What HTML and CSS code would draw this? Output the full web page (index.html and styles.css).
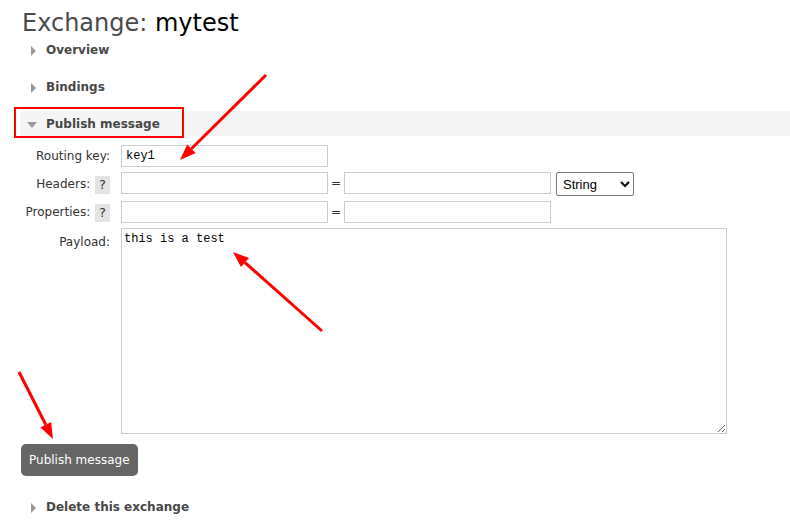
FILE: index.html
```html
<!DOCTYPE html>
<html>
<head>
<meta charset="utf-8">
<title>Exchange: mytest</title>
<link rel="stylesheet" href="styles.css">
</head>
<body>
<h1 class="title">Exchange: <span class="title-name">mytest</span></h1>

<div class="section">
  <h2 class="sec-head"><span class="tri tri-right"></span>Overview</h2>
</div>
<div class="section">
  <h2 class="sec-head"><span class="tri tri-right"></span>Bindings</h2>
</div>
<div class="section">
  <h2 class="sec-head sec-open"><span class="tri tri-down"></span>Publish message</h2>
  <form class="pub-form">
    <label class="lbl">Routing key:</label>
    <div class="fields"><input class="inp inp-mono" type="text" value="key1"></div>

    <label class="lbl lbl-tall">Headers: <span class="help">?</span></label>
    <div class="fields">
      <input class="inp" type="text">
      <span class="eq">=</span>
      <input class="inp" type="text">
      <select class="sel"><option>String</option><option>Number</option><option>Boolean</option></select>
    </div>

    <label class="lbl">Properties: <span class="help">?</span></label>
    <div class="fields">
      <input class="inp" type="text">
      <span class="eq">=</span>
      <input class="inp" type="text">
    </div>

    <label class="lbl lbl-top">Payload:</label>
    <div class="fields"><textarea class="payload">this is a test</textarea></div>
  </form>
  <button class="btn" type="button">Publish message</button>
</div>
<div class="section">
  <h2 class="sec-head"><span class="tri tri-right"></span>Delete this exchange</h2>
</div>

<svg class="annot" width="790" height="521" viewBox="0 0 790 521">
  <rect x="15" y="108" width="168" height="29" fill="none" stroke="#f00" stroke-width="2"/>
  <line x1="266" y1="75" x2="191.4" y2="148.8" stroke="#f00" stroke-width="3"/>
  <polygon points="180,160 195.6,153 187.2,144.5" fill="#f00"/>
  <line x1="322" y1="331" x2="245" y2="262.6" stroke="#f00" stroke-width="3"/>
  <polygon points="233,252 249,258.1 241,267.1" fill="#f00"/>
  <line x1="19" y1="372" x2="45.8" y2="424.7" stroke="#f00" stroke-width="3"/>
  <polygon points="53,439 40.4,427.4 51.1,422" fill="#f00"/>
</svg>
</body>
</html>
```

FILE: styles.css
```css
html, body {
  margin: 0;
  padding: 0;
  background: #fff;
}
body {
  font-family: "DejaVu Sans", Verdana, sans-serif;
  font-size: 12px;
  color: #333;
  width: 790px;
  height: 521px;
  overflow: hidden;
  position: relative;
}
.title {
  margin: 9px 0 0 22px;
  font-size: 24px;
  line-height: 28px;
  font-weight: normal;
  color: #4a4a4a;
}
.title-name {
  color: #000;
}
.section {
  margin-top: 12px;
}
.section:first-of-type {
  margin-top: 0;
}
.sec-head {
  box-sizing: border-box;
  margin: 0 0 0 20px;
  height: 25px;
  padding-top: 2px;
  line-height: 23px;
  font-size: 12px;
  font-weight: bold;
  color: #484848;
  display: flex;
  align-items: center;
}
.sec-open {
  background: #f5f5f5;
}
.tri {
  display: inline-block;
  width: 0;
  height: 0;
}
.tri-right {
  border-left: 5px solid #999;
  border-top: 5px solid transparent;
  border-bottom: 5px solid transparent;
  margin: 0 10px 0 11px;
}
.tri-down {
  border-top: 6px solid #999;
  border-left: 5px solid transparent;
  border-right: 5px solid transparent;
  margin: 1px 9px 0 7px;
}
.pub-form {
  margin-top: 9px;
  display: grid;
  grid-template-columns: 110px 1fr;
  column-gap: 11px;
  row-gap: 5px;
  align-items: start;
}
.lbl {
  text-align: right;
  line-height: 22px;
  color: #333;
  white-space: nowrap;
}
.lbl-tall {
  line-height: 24px;
}
.lbl-top {
  padding-top: 3px;
}
.help {
  display: inline-block;
  width: 15px;
  height: 18px;
  line-height: 18px;
  text-align: center;
  background: #e4e4e4;
  color: #333;
  font-size: 13px;
  vertical-align: middle;
  margin-left: 1px;
}
.fields {
  display: flex;
  align-items: flex-start;
}
.inp {
  box-sizing: border-box;
  width: 207px;
  height: 22px;
  border: 1px solid #ccc;
  margin: 0;
  padding: 0 4px;
  font-family: "DejaVu Sans", sans-serif;
  font-size: 12px;
  background: #fff;
}
.inp-mono {
  font-family: "Liberation Mono", monospace;
  font-size: 12px;
  color: #000;
}
.eq {
  width: 10px;
  margin: 0 3px;
  line-height: 22px;
  text-align: center;
  color: #333;
}
.sel {
  box-sizing: border-box;
  width: 78px;
  height: 24px;
  margin-left: 5px;
  font-family: "Liberation Sans", Arial, sans-serif;
  font-size: 13px;
  color: #000;
  border: 1px solid #767676;
  border-radius: 2px;
  background: #fff;
  padding: 0 2px;
}
.payload {
  box-sizing: border-box;
  width: 606px;
  height: 206px;
  margin: 0;
  border: 1px solid #ccc;
  padding: 3px 2px;
  font-family: "Liberation Mono", monospace;
  font-size: 12px;
  line-height: 15px;
  color: #000;
  resize: both;
}
.btn {
  display: block;
  margin: 10px 0 18px 21px;
  height: 32px;
  padding: 0 8px;
  border: 0;
  border-radius: 5px;
  background: #666;
  color: #fff;
  font-family: "DejaVu Sans", Verdana, sans-serif;
  font-size: 12px;
}
.annot {
  position: absolute;
  left: 0;
  top: 0;
  pointer-events: none;
}
```
